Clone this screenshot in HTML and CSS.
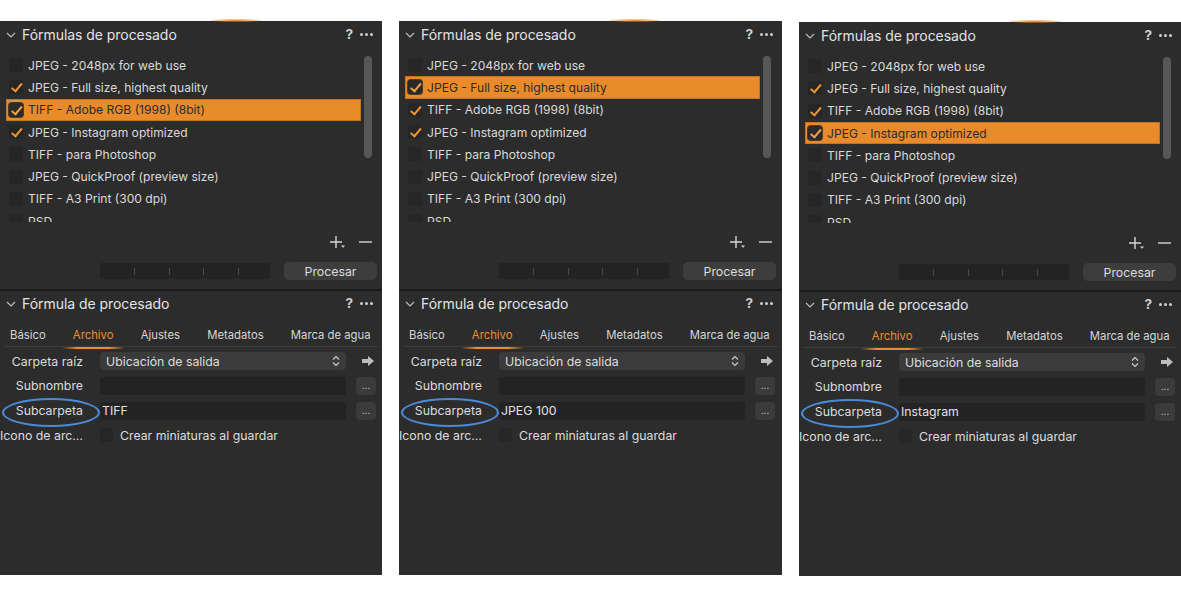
FILE: index.html
```html
<!DOCTYPE html>
<html lang="es">
<head>
<meta charset="utf-8">
<title>Fórmulas de procesado</title>
<link rel="stylesheet" href="styles.css">
</head>
<body>
<div class="page">

  <!-- Panel 1 -->
  <section class="panel">
    <div class="glow"></div>
    <div class="hdr">
      <svg class="chev" width="10" height="6" viewBox="0 0 10 6"><path d="M1 1l4 4 4-4" fill="none" stroke="#bdbdbd" stroke-width="1.2"/></svg>
      <span class="title">Fórmulas de procesado</span>
      <span class="hdr-icons"><span class="q">?</span><span class="dots"><i></i><i></i><i></i></span></span>
    </div>
    <div class="listwrap">
      <ul class="list">
        <li class="row"><span class="cb"></span><span>JPEG - 2048px for web use</span></li>
        <li class="row"><span class="cb on"></span><span>JPEG - Full size, highest quality</span></li>
        <li class="row sel"><span class="cb on"></span><span>TIFF - Adobe RGB (1998) (8bit)</span></li>
        <li class="row"><span class="cb on"></span><span>JPEG - Instagram optimized</span></li>
        <li class="row"><span class="cb"></span><span>TIFF - para Photoshop</span></li>
        <li class="row"><span class="cb"></span><span>JPEG - QuickProof (preview size)</span></li>
        <li class="row"><span class="cb"></span><span>TIFF - A3 Print (300 dpi)</span></li>
        <li class="row"><span class="cb"></span><span>PSD</span></li>
      </ul>
      <div class="track"><div class="thumb"></div></div>
    </div>
    <div class="addrm">
      <svg width="16" height="14" viewBox="0 0 16 14"><path d="M6 1v12M0 7h12" stroke="#d6d6d6" stroke-width="1.4"/><path d="M11 10.5h4l-2 2.2z" fill="#d6d6d6"/></svg>
      <svg width="13" height="14" viewBox="0 0 13 14"><path d="M0 7h13" stroke="#d6d6d6" stroke-width="1.4"/></svg>
    </div>
    <div class="procrow">
      <div class="progress"><i></i><i></i><i></i><i></i></div>
      <div class="btn">Procesar</div>
    </div>
    <div class="divider"></div>
    <div class="hdr hdr2">
      <svg class="chev" width="10" height="6" viewBox="0 0 10 6"><path d="M1 1l4 4 4-4" fill="none" stroke="#bdbdbd" stroke-width="1.2"/></svg>
      <span class="title">Fórmula de procesado</span>
      <span class="hdr-icons"><span class="q">?</span><span class="dots"><i></i><i></i><i></i></span></span>
    </div>
    <div class="tabs">
      <span>Básico</span><span class="act">Archivo</span><span>Ajustes</span><span>Metadatos</span><span>Marca de agua</span>
    </div>
    <div class="form">
      <span class="lbl">Carpeta raíz</span>
      <div class="select"><span>Ubicación de salida</span>
        <svg width="8" height="12" viewBox="0 0 8 12"><path d="M1 4.5l3-3 3 3M1 7.5l3 3 3-3" fill="none" stroke="#cfcfcf" stroke-width="1.1"/></svg>
      </div>
      <svg class="arrow" width="12" height="10" viewBox="0 0 12 10"><path d="M0 3h6V0l6 5-6 5V7H0z" fill="#bdbdbd"/></svg>
      <span class="lbl">Subnombre</span>
      <div class="field"></div>
      <div class="more">...</div>
      <span class="lbl ring">Subcarpeta</span>
      <div class="field">TIFF</div>
      <div class="more">...</div>
      <span class="lbl">Icono de arc…</span>
      <div class="chkline"><span class="cb"></span><span>Crear miniaturas al guardar</span></div>
      <span></span>
    </div>
  </section>

  <!-- Panel 2 -->
  <section class="panel wide">
    <div class="glow"></div>
    <div class="hdr">
      <svg class="chev" width="10" height="6" viewBox="0 0 10 6"><path d="M1 1l4 4 4-4" fill="none" stroke="#bdbdbd" stroke-width="1.2"/></svg>
      <span class="title">Fórmulas de procesado</span>
      <span class="hdr-icons"><span class="q">?</span><span class="dots"><i></i><i></i><i></i></span></span>
    </div>
    <div class="listwrap">
      <ul class="list">
        <li class="row"><span class="cb"></span><span>JPEG - 2048px for web use</span></li>
        <li class="row sel"><span class="cb on"></span><span>JPEG - Full size, highest quality</span></li>
        <li class="row"><span class="cb on"></span><span>TIFF - Adobe RGB (1998) (8bit)</span></li>
        <li class="row"><span class="cb on"></span><span>JPEG - Instagram optimized</span></li>
        <li class="row"><span class="cb"></span><span>TIFF - para Photoshop</span></li>
        <li class="row"><span class="cb"></span><span>JPEG - QuickProof (preview size)</span></li>
        <li class="row"><span class="cb"></span><span>TIFF - A3 Print (300 dpi)</span></li>
        <li class="row"><span class="cb"></span><span>PSD</span></li>
      </ul>
      <div class="track"><div class="thumb"></div></div>
    </div>
    <div class="addrm">
      <svg width="16" height="14" viewBox="0 0 16 14"><path d="M6 1v12M0 7h12" stroke="#d6d6d6" stroke-width="1.4"/><path d="M11 10.5h4l-2 2.2z" fill="#d6d6d6"/></svg>
      <svg width="13" height="14" viewBox="0 0 13 14"><path d="M0 7h13" stroke="#d6d6d6" stroke-width="1.4"/></svg>
    </div>
    <div class="procrow">
      <div class="progress"><i></i><i></i><i></i><i></i></div>
      <div class="btn">Procesar</div>
    </div>
    <div class="divider"></div>
    <div class="hdr hdr2">
      <svg class="chev" width="10" height="6" viewBox="0 0 10 6"><path d="M1 1l4 4 4-4" fill="none" stroke="#bdbdbd" stroke-width="1.2"/></svg>
      <span class="title">Fórmula de procesado</span>
      <span class="hdr-icons"><span class="q">?</span><span class="dots"><i></i><i></i><i></i></span></span>
    </div>
    <div class="tabs">
      <span>Básico</span><span class="act">Archivo</span><span>Ajustes</span><span>Metadatos</span><span>Marca de agua</span>
    </div>
    <div class="form">
      <span class="lbl">Carpeta raíz</span>
      <div class="select"><span>Ubicación de salida</span>
        <svg width="8" height="12" viewBox="0 0 8 12"><path d="M1 4.5l3-3 3 3M1 7.5l3 3 3-3" fill="none" stroke="#cfcfcf" stroke-width="1.1"/></svg>
      </div>
      <svg class="arrow" width="12" height="10" viewBox="0 0 12 10"><path d="M0 3h6V0l6 5-6 5V7H0z" fill="#bdbdbd"/></svg>
      <span class="lbl">Subnombre</span>
      <div class="field"></div>
      <div class="more">...</div>
      <span class="lbl ring">Subcarpeta</span>
      <div class="field">JPEG 100</div>
      <div class="more">...</div>
      <span class="lbl">Icono de arc…</span>
      <div class="chkline"><span class="cb"></span><span>Crear miniaturas al guardar</span></div>
      <span></span>
    </div>
  </section>

  <!-- Panel 3 -->
  <section class="panel low">
    <div class="glow"></div>
    <div class="hdr">
      <svg class="chev" width="10" height="6" viewBox="0 0 10 6"><path d="M1 1l4 4 4-4" fill="none" stroke="#bdbdbd" stroke-width="1.2"/></svg>
      <span class="title">Fórmulas de procesado</span>
      <span class="hdr-icons"><span class="q">?</span><span class="dots"><i></i><i></i><i></i></span></span>
    </div>
    <div class="listwrap">
      <ul class="list">
        <li class="row"><span class="cb"></span><span>JPEG - 2048px for web use</span></li>
        <li class="row"><span class="cb on"></span><span>JPEG - Full size, highest quality</span></li>
        <li class="row"><span class="cb on"></span><span>TIFF - Adobe RGB (1998) (8bit)</span></li>
        <li class="row sel"><span class="cb on"></span><span>JPEG - Instagram optimized</span></li>
        <li class="row"><span class="cb"></span><span>TIFF - para Photoshop</span></li>
        <li class="row"><span class="cb"></span><span>JPEG - QuickProof (preview size)</span></li>
        <li class="row"><span class="cb"></span><span>TIFF - A3 Print (300 dpi)</span></li>
        <li class="row"><span class="cb"></span><span>PSD</span></li>
      </ul>
      <div class="track"><div class="thumb"></div></div>
    </div>
    <div class="addrm">
      <svg width="16" height="14" viewBox="0 0 16 14"><path d="M6 1v12M0 7h12" stroke="#d6d6d6" stroke-width="1.4"/><path d="M11 10.5h4l-2 2.2z" fill="#d6d6d6"/></svg>
      <svg width="13" height="14" viewBox="0 0 13 14"><path d="M0 7h13" stroke="#d6d6d6" stroke-width="1.4"/></svg>
    </div>
    <div class="procrow">
      <div class="progress"><i></i><i></i><i></i><i></i></div>
      <div class="btn">Procesar</div>
    </div>
    <div class="divider"></div>
    <div class="hdr hdr2">
      <svg class="chev" width="10" height="6" viewBox="0 0 10 6"><path d="M1 1l4 4 4-4" fill="none" stroke="#bdbdbd" stroke-width="1.2"/></svg>
      <span class="title">Fórmula de procesado</span>
      <span class="hdr-icons"><span class="q">?</span><span class="dots"><i></i><i></i><i></i></span></span>
    </div>
    <div class="tabs">
      <span>Básico</span><span class="act">Archivo</span><span>Ajustes</span><span>Metadatos</span><span>Marca de agua</span>
    </div>
    <div class="form">
      <span class="lbl">Carpeta raíz</span>
      <div class="select"><span>Ubicación de salida</span>
        <svg width="8" height="12" viewBox="0 0 8 12"><path d="M1 4.5l3-3 3 3M1 7.5l3 3 3-3" fill="none" stroke="#cfcfcf" stroke-width="1.1"/></svg>
      </div>
      <svg class="arrow" width="12" height="10" viewBox="0 0 12 10"><path d="M0 3h6V0l6 5-6 5V7H0z" fill="#bdbdbd"/></svg>
      <span class="lbl">Subnombre</span>
      <div class="field"></div>
      <div class="more">...</div>
      <span class="lbl ring">Subcarpeta</span>
      <div class="field">Instagram</div>
      <div class="more">...</div>
      <span class="lbl">Icono de arc…</span>
      <div class="chkline"><span class="cb"></span><span>Crear miniaturas al guardar</span></div>
      <span></span>
    </div>
  </section>

</div>
</body>
</html>
```

FILE: styles.css
```css
* { box-sizing: border-box; }
html, body { margin: 0; padding: 0; background: #ffffff; }
body {
  font-family: Inter, "Noto Sans", "Liberation Sans", sans-serif;
  color: #d9d9d9;
  width: 1181px;
  height: 601px;
  overflow: hidden;
}
.page {
  display: flex;
  gap: 17px;
  padding-top: 21px;
  align-items: flex-start;
}
.panel {
  position: relative;
  width: 382px;
  height: 554px;
  background: #2c2c2c;
  flex: none;
}
.panel.wide { width: 383px; }
.panel.low { margin-top: 1px; }
.glow {
  position: absolute;
  top: -2px;
  left: 210px;
  width: 52px;
  height: 3px;
  border-radius: 50%;
  background: radial-gradient(ellipse at center, rgba(232,139,44,0.95) 0%, rgba(232,139,44,0.5) 50%, rgba(232,139,44,0) 100%);
}

/* header */
.hdr {
  height: 26px;
  display: flex;
  align-items: center;
  padding-left: 6px;
  padding-right: 9px;
}
.hdr2 { height: 24px; }
.chev { flex: none; margin-top: 1px; }
.title {
  margin-left: 6px;
  font-size: 14px;
  color: #e3e3e3;
  letter-spacing: -0.05px;
}
.hdr-icons {
  margin-left: auto;
  display: flex;
  align-items: center;
  gap: 7px;
}
.q { font-size: 13.5px; font-weight: 700; color: #cfcfcf; }
.dots { display: flex; gap: 2px; }
.dots i { width: 3px; height: 3px; border-radius: 50%; background: #cfcfcf; display: block; }

/* list */
.listwrap {
  margin-top: 7px;
  height: 168px;
  display: flex;
}
.list {
  list-style: none;
  margin: 0;
  padding: 0;
  margin-left: 6px;
  width: 355px;
  height: 168px;
  overflow: hidden;
}
.row {
  height: 22.3px;
  display: flex;
  align-items: center;
  font-size: 12.1px;
  color: #dadada;
  padding-left: 2px;
  border: 1px solid transparent;
  white-space: nowrap;
}
.row > span:last-child { margin-left: 5px; }
.row.sel {
  background: #e98b2b;
  border-color: #c6731f;
  color: #2b2b2b;
}
.cb {
  width: 14px;
  height: 14px;
  border-radius: 3px;
  background: #262626;
  flex: none;
  position: relative;
}
.cb.on::after {
  content: "";
  position: absolute;
  left: 4.5px;
  top: 1px;
  width: 4px;
  height: 8.5px;
  border-right: 2px solid #f1932f;
  border-bottom: 2px solid #f1932f;
  transform: rotate(40deg);
}
.row.sel .cb { background: #2a2a2a; box-shadow: 0 0 0 1px #4a3a28; }
.row.sel .cb.on::after { border-color: #f2a04a; }
.track {
  margin-left: 3px;
  width: 8px;
}
.thumb {
  margin-top: 2px;
  height: 102px;
  border-radius: 4px;
  background: #575757;
}

/* add/remove */
.addrm {
  margin-top: 13px;
  height: 14px;
  display: flex;
  justify-content: flex-end;
  gap: 13px;
  padding-right: 10px;
}

/* process row */
.procrow {
  margin-top: 13px;
  height: 18px;
  display: flex;
  padding-left: 100px;
}
.progress {
  width: 170px;
  height: 16px;
  margin-top: 1px;
  background: #232323;
  border-radius: 2px;
  display: flex;
  align-items: center;
  padding-left: 34px;
  gap: 33.5px;
}
.progress i { display: block; width: 1px; height: 7px; background: #4c4c4c; }
.btn {
  margin-left: 14px;
  width: 93px;
  height: 18px;
  border-radius: 5px;
  background: #3d3d3d;
  font-size: 12.3px;
  color: #dedede;
  display: flex;
  align-items: center;
  justify-content: center;
}

.divider {
  margin-top: 9px;
  height: 2px;
  background: #1b1b1b;
}

/* tabs */
.tabs {
  margin: 7px 4px 0 5px;
  height: 25px;
  display: flex;
  align-items: center;
  gap: 27.2px;
  padding-left: 5px;
  padding-top: 1px;
  font-size: 11.3px;
  color: #d6d6d6;
  border-bottom: 1px solid #3e3e3e;
  white-space: nowrap;
}
.tabs .act { color: #ec8e2f; position: relative; }
.tabs .act::after {
  content: "";
  position: absolute;
  left: -11px;
  right: -11px;
  bottom: -7px;
  height: 2px;
  background: linear-gradient(90deg, rgba(236,142,47,0) 0%, #ec8e2f 25%, #ec8e2f 75%, rgba(236,142,47,0) 100%);
}

/* form */
.form {
  margin-top: 5px;
  display: grid;
  grid-template-columns: 90px 246px 20px;
  column-gap: 10px;
  grid-auto-rows: 18px;
  row-gap: 6.8px;
  align-items: center;
  font-size: 12.3px;
  color: #dcdcdc;
}
.lbl { text-align: right; padding-right: 7px; white-space: nowrap; }
.lbl.ring { position: relative; }
.lbl.ring::before {
  content: "";
  position: absolute;
  left: 2px;
  top: -5px;
  width: 94px;
  height: 25px;
  border: 2px solid #4a8ad6;
  border-radius: 50%;
}
.select {
  height: 18px;
  background: #3b3b3b;
  border-radius: 4px;
  display: flex;
  align-items: center;
  padding: 0 6px;
  justify-content: space-between;
  color: #dedede;
}
.arrow { justify-self: center; margin-left: 3px; }
.field {
  height: 18px;
  background: #232323;
  border-radius: 3px;
  display: flex;
  align-items: center;
  padding-left: 2px;
  color: #e2e2e2;
}
.more {
  height: 18px;
  background: #3b3b3b;
  border-radius: 4px;
  font-size: 10px;
  color: #cfcfcf;
  display: flex;
  align-items: center;
  justify-content: center;
  padding-bottom: 2px;
}
.chkline { display: flex; align-items: center; gap: 7px; }
.chkline .cb { width: 13px; height: 14px; }
```
